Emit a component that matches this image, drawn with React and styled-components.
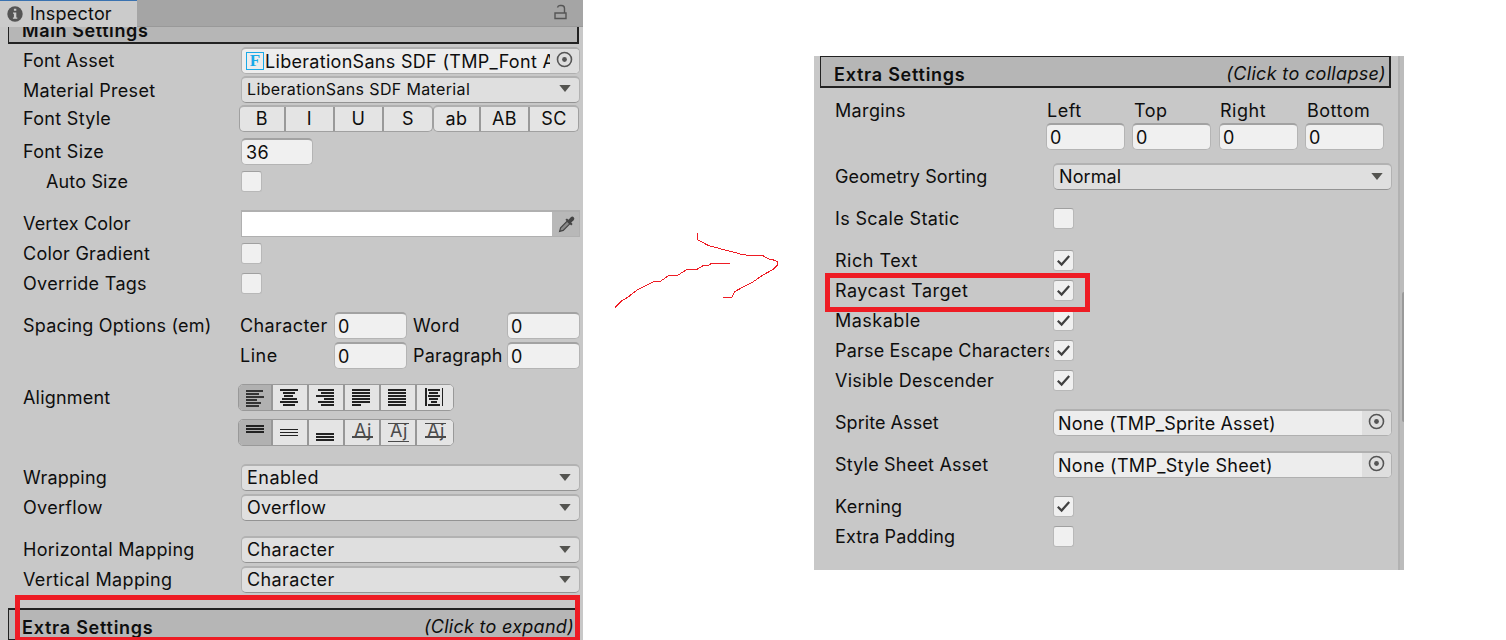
import React from "react";
import styled, { createGlobalStyle } from "styled-components";

const GlobalStyle = createGlobalStyle`
  * { box-sizing: border-box; }
  body {
    margin: 0;
    background: #fff;
    color: #0e0e0e;
    font-family: Inter, "Liberation Sans", sans-serif;
    font-size: 18px;
    letter-spacing: 0.5px;
    overflow: hidden;
  }
  svg { display: block; flex: none; }
`;

const Page = styled.div`
  display: flex;
  align-items: flex-start;
  width: 1506px;
  height: 640px;
  overflow: hidden;
`;

const LeftPanel = styled.section`
  width: 583px;
  height: 640px;
  background: #c8c8c8;
  overflow: hidden;
`;

const RightPanel = styled.section`
  display: flex;
  width: 590px;
  height: 514px;
  margin-top: 56px;
  background: #c8c8c8;
`;

const RightContent = styled.div`
  width: 584px;
`;

const Scrollbar = styled.div`
  width: 6px;
  padding: 236px 0 0 2px;
  border-left: 2px solid #b2b2b2;
  background: #bcbcbc;
`;

const Thumb = styled.div`
  height: 130px;
  border-radius: 3px 0 0 3px;
  background: #9a9a9a;
`;

const TabBar = styled.div`
  display: flex;
  justify-content: space-between;
  height: 27px;
  background: #a5a5a5;
  border-bottom: 1px solid #999;
`;

const Tab = styled.div`
  display: flex;
  align-items: center;
  gap: 7px;
  width: 137px;
  height: 27px;
  padding: 0 0 1px 7px;
  border-top: 1px solid #3a72b0;
  background: #cbcbcb;
  letter-spacing: 0.2px;
`;

const LockButton = styled.div`
  padding: 4px 16px 0 0;
`;

const Header = styled.div`
  display: flex;
  justify-content: space-between;
  align-items: flex-start;
  height: ${(p) => p.$h}px;
  margin: ${(p) => p.$mt || 0}px 0 0 ${(p) => p.$ml}px;
  width: 571px;
  padding: ${(p) => p.$pt}px 3px 0 13px;
  border: solid #222;
  border-width: ${(p) => p.$bw};
  background: #b6b6b6;
  line-height: 22px;
  white-space: nowrap;
`;

const Title = styled.span`
  font-weight: 600;
  letter-spacing: ${(p) => p.$ls || 0.75}px;
`;

const Hint = styled.em`
  margin-top: -1px;
  letter-spacing: ${(p) => p.$ls || 0.28}px;
`;

const ClippedTitle = styled(Title)`
  margin-top: -8px;
`;

const HeaderClip = styled.div`
  height: 17px;
  overflow: hidden;
`;

const Rows = styled.div`
  padding: ${(p) => p.$pt}px 0 0 ${(p) => p.$pl}px;
`;

const Row = styled.div`
  display: flex;
  align-items: center;
  height: ${(p) => p.$h || 30}px;
  margin-top: ${(p) => p.$mt || 0}px;
`;

const Label = styled.span`
  width: ${(p) => p.$w || 214}px;
  margin-right: ${(p) => (p.$w ? 3 : 4)}px;
  padding-top: ${(p) => p.$pt || 0}px;
  padding-left: ${(p) => p.$indent || 0}px;
  overflow: hidden;
  white-space: nowrap;
  letter-spacing: ${(p) => p.$ls || 0.25}px;
`;

const SmallLabel = styled(Label)`
  width: ${(p) => p.$w}px;
  margin-right: 0;
`;

const Input = styled.div`
  width: ${(p) => p.$w}px;
  height: 27px;
  padding-left: ${(p) => p.$pl || 3}px;
  border: 1px solid #b4b4b4;
  border-top: 2px solid #a2a2a2;
  border-radius: 5px;
  background: #f0f0f0;
  line-height: 25px;
`;

const Select = styled.div`
  display: flex;
  align-items: center;
  justify-content: space-between;
  width: 339px;
  height: 27px;
  padding: 0 8px ${(p) => p.$pb || 0}px 5px;
  border: 1px solid #b2b2b2;
  border-top-width: 2px;
  border-bottom-color: #939393;
  border-radius: 5px;
  background: #dfdfdf;
  font-size: ${(p) => p.$size || 18}px;
  letter-spacing: ${(p) => p.$ls || 0.4}px;
`;

const ObjectBox = styled.div`
  display: flex;
  align-items: center;
  width: 339px;
  height: 27px;
  padding-left: 4px;
  border: 1px solid #b0b0b0;
  border-top-width: 2px;
  border-radius: 5px;
  background: #ededed;
  overflow: hidden;
`;

const ObjectName = styled.span`
  flex: 1;
  padding-top: 2px;
  overflow: hidden;
  white-space: nowrap;
  letter-spacing: ${(p) => p.$ls || 0.3}px;
`;

const Picker = styled.div`
  display: flex;
  align-items: center;
  justify-content: center;
  width: 29px;
  height: 25px;
  padding-bottom: 2px;
  background: #dedede;
`;

const FontIcon = styled.span`
  display: flex;
  align-items: center;
  justify-content: center;
  width: 18px;
  height: 18px;
  margin-right: 1px;
  border: 1px solid #19a9e8;
  color: #19a9e8;
  font: bold 17px/16px "Liberation Serif", serif;
  letter-spacing: 0;
`;

const Check = styled.div`
  display: flex;
  align-items: center;
  justify-content: center;
  width: 21px;
  height: 21px;
  border: 1px solid #b8b8b8;
  border-top-color: #a0a0a0;
  border-radius: 3px;
  background: #f0f0f0;
`;

const ColorField = styled.div`
  display: flex;
  justify-content: space-between;
  width: 339px;
  height: 27px;
  border: 1px solid #b0b0b0;
  border-top-width: 2px;
`;

const Swatch = styled.div`
  width: 310px;
  background: #fff;
`;

const Dropper = styled.div`
  display: flex;
  align-items: center;
  justify-content: center;
  width: 27px;
  padding-left: 2px;
  background: #b8b8b8;
`;

const ButtonGroup = styled.div`
  display: flex;
  height: 27px;
  border: 1px solid #a0a0a0;
  border-top: 2px solid #b0b0b0;
  border-radius: 5px;
  background: #e4e4e4;
  overflow: hidden;
`;

const StyleButton = styled.div`
  width: ${(p) => p.$w}px;
  border-right: 2px solid #999;
  text-align: center;
  line-height: 24px;
  &:last-child { border-right: 0; }
`;

const StyleButtons = styled.div`
  display: flex;
  margin-left: -2px;
`;

const AlignGroup = styled(ButtonGroup)`
  width: 216px;
  margin-left: -3px;
  border: 1px solid #999;
`;

const AlignButton = styled.div`
  display: flex;
  justify-content: center;
  width: 36px;
  padding-right: 2px;
  border-right: 2px solid #979797;
  background: ${(p) => (p.$active ? "#b1b1b1" : "#e4e4e4")};
  &:first-child { width: 34px; padding-right: 0; }
  &:last-child { border-right: 0; }
`;

const MarginColumn = styled.div`
  width: ${(p) => p.$w}px;
  display: flex;
  flex-direction: column;
`;

const MarginName = styled.span`
  height: 26px;
  line-height: 28px;
  padding-left: ${(p) => p.$pl || 0}px;
`;

const MarginsLabel = styled(Label)`
  line-height: 28px;
`;

const MarginRow = styled.div`
  display: flex;
  height: 64px;
`;

const Middle = styled.div`
  width: 231px;
  padding: 220px 0 0 22px;
`;

// pen marks drawn over the panels
const Marker = styled.div`
  position: absolute;
  left: ${(p) => p.$x}px;
  top: ${(p) => p.$y}px;
  width: ${(p) => p.$w}px;
  height: ${(p) => p.$h}px;
  border: 5px solid #ee1c24;
`;

const Arrow = () => (
  <svg width="12" height="7" viewBox="0 0 12 7">
    <path d="M0.3 0h11.4L6 7z" fill="#545450" />
  </svg>
);

const Target = () => (
  <svg width="17" height="17" viewBox="0 0 17 17">
    <circle cx="8.5" cy="8.5" r="7" fill="none" stroke="#555" strokeWidth="1.6" />
    <circle cx="8.5" cy="8.5" r="2.4" fill="#555" />
  </svg>
);

const Info = () => (
  <svg width="16" height="16" viewBox="0 0 16 16">
    <circle cx="8" cy="8" r="7.7" fill="#555" />
    <path d="M6.9 2.8h2.4v2H6.9zM6 6.4h3.3v5h1v1.4H5.9v-1.4h1V7.8H6z" fill="#cbcbcb" />
  </svg>
);

const Lock = () => (
  <svg width="13" height="16" viewBox="0 0 13 16">
    <path d="M1 9h11v5.5H1zM10.5 9V4.5Q10.5 1.5 7.5 1.5H6Q4 1.5 3.5 3.5" fill="none" stroke="#555" strokeWidth="1.4" />
  </svg>
);

const Pipette = () => (
  <svg width="18" height="18" viewBox="0 0 18 18">
    <path d="M1.6 16.4l1-3.6L9.2 6.2l2.6 2.6-6.6 6.6z" fill="#8a8a8a" stroke="#444" strokeWidth="1.2" />
    <path d="M7.4 4.8l1.5-1.4 1.6 1.4 2.3-2.5q1.5-1.4 2.9 0t0 2.9l-2.5 2.3 1.4 1.6-1.4 1.5z" fill="#444" />
  </svg>
);

const CheckBox = ({ on }) => (
  <Check>
    {on && (
      <svg width="15" height="13" viewBox="0 0 15 13">
        <path d="M1.8 6.8L5.6 10.6 13.2 2" fill="none" stroke="#404040" strokeWidth="2.2" />
      </svg>
    )}
  </Check>
);

const Bars = ({ bars, color = "#222" }) => (
  <svg width="18" height="25" viewBox="0 0 18 25" shapeRendering="crispEdges" fill={color}>
    {bars.map(([x, y, w, h = 2], i) => (
      <rect key={i} x={x} y={y} width={w} height={h} />
    ))}
  </svg>
);

const Glyphs = ({ lines }) => (
  <svg width="23" height="25" viewBox="-2 0 23 25" fill="#4a4a4a">
    <text x="2" y="17" fontSize="18" fontWeight="400" letterSpacing="0.5">Aj</text>
    {lines.map(([y, h]) => (
      <rect key={y} x="0" y={y} width="21" height={h} />
    ))}
  </svg>
);

const stack = (rows, y0 = 4) => rows.map(([x, w], i) => [x, y0 + i * 3, w]);

const horizontal = [
  stack([[0, 17], [0, 13], [0, 18], [0, 11], [0, 15], [0, 13]], 5),
  stack([[0, 18], [3, 12], [4, 9], [2, 15], [0, 18], [3, 12]]),
  stack([[2, 16], [5, 13], [0, 18], [8, 10], [2, 16], [5, 13]]),
  stack([[0, 18], [0, 18], [0, 18], [0, 18], [0, 18], [0, 9]]),
  stack([[0, 18], [0, 18], [0, 18], [0, 18], [0, 18], [0, 18]]),
  [
    ...stack([[3, 12], [4, 9], [3, 12], [4, 9], [6, 6], [3, 12]]),
    [0, 3, 2, 18],
    [17, 3, 1, 18],
  ],
];

const Dropdown = ({ children, ...rest }) => (
  <Select {...rest}>
    {children}
    <Arrow />
  </Select>
);

const ObjectField = ({ icon, ls, children }) => (
  <ObjectBox>
    {icon && <FontIcon>F</FontIcon>}
    <ObjectName $ls={ls}>{children}</ObjectName>
    <Picker><Target /></Picker>
  </ObjectBox>
);

const Inspector = () => (
  <LeftPanel>
    <TabBar>
      <Tab><Info />Inspector</Tab>
      <LockButton><Lock /></LockButton>
    </TabBar>
    <HeaderClip>
      <Header $h={17} $ml={8} $pt={1} $bw="0 2px 2px 1px">
        <ClippedTitle $ls={0.6}>Main Settings</ClippedTitle>
      </Header>
    </HeaderClip>
    <Rows $pt={1} $pl={23}>
      <Row>
        <Label $ls={0.15}>Font Asset</Label>
        <ObjectField icon>LiberationSans SDF (TMP_Font Asset)</ObjectField>
      </Row>
      <Row $h={28}>
        <Label $ls={0.3} $pt={2}>Material Preset</Label>
        <Dropdown $size={16} $ls={0.36} $pb={2}>LiberationSans SDF Material</Dropdown>
      </Row>
      <Row>
        <Label $ls={0.3}>Font Style</Label>
        <StyleButtons>
          <ButtonGroup>
            <StyleButton $w={46}>B</StyleButton>
            <StyleButton $w={49}>I</StyleButton>
            <StyleButton $w={49}>U</StyleButton>
            <StyleButton $w={48}>S</StyleButton>
          </ButtonGroup>
          <ButtonGroup>
            <StyleButton $w={47}>ab</StyleButton>
            <StyleButton $w={49}>AB</StyleButton>
            <StyleButton $w={48}>SC</StyleButton>
          </ButtonGroup>
        </StyleButtons>
      </Row>
      <Row $mt={3}>
        <Label $ls={0.3}>Font Size</Label>
        <Input $w={72} $pl={4}>36</Input>
      </Row>
      <Row>
        <Label $ls={0.15} $indent={23}>Auto Size</Label>
        <CheckBox />
      </Row>
      <Row $mt={12}>
        <Label $ls={0.17}>Vertex Color</Label>
        <ColorField>
          <Swatch />
          <Dropper><Pipette /></Dropper>
        </ColorField>
      </Row>
      <Row>
        <Label $ls={0.25}>Color Gradient</Label>
        <CheckBox />
      </Row>
      <Row>
        <Label $ls={0.3}>Override Tags</Label>
        <CheckBox />
      </Row>
      <Row $mt={12}>
        <Label $w={214} $ls={0.2}>Spacing Options (em)</Label>
        <SmallLabel $w={94} $ls={0.4}>Character</SmallLabel>
        <Input $w={73}>0</Input>
        <SmallLabel $w={100} $indent={6} $ls={0.5}>Word</SmallLabel>
        <Input $w={73}>0</Input>
      </Row>
      <Row>
        <Label $w={214} />
        <SmallLabel $w={94} $ls={0.5}>Line</SmallLabel>
        <Input $w={73}>0</Input>
        <SmallLabel $w={100} $indent={6} $ls={0.17}>Paragraph</SmallLabel>
        <Input $w={73}>0</Input>
      </Row>
      <Row $mt={12}>
        <Label $ls={0.2}>Alignment</Label>
        <AlignGroup>
          {horizontal.map((bars, i) => (
            <AlignButton key={i} $active={i === 0}>
              <Bars bars={bars} color={i === 0 ? "#333" : "#222"} />
            </AlignButton>
          ))}
        </AlignGroup>
      </Row>
      <Row $mt={5}>
        <Label />
        <AlignGroup>
          <AlignButton $active><Bars bars={[[0, 5, 18], [0, 8, 18], [0, 11, 18]]} /></AlignButton>
          <AlignButton><Bars bars={[[0, 9, 18, 1], [0, 12, 18, 1], [0, 15, 18, 1]]} /></AlignButton>
          <AlignButton><Bars bars={[[0, 13, 18], [0, 16, 18], [0, 19, 18]]} /></AlignButton>
          <AlignButton><Glyphs lines={[[16, 2]]} /></AlignButton>
          <AlignButton><Glyphs lines={[[3, 1], [21, 1]]} /></AlignButton>
          <AlignButton><Glyphs lines={[[3, 1], [16, 2]]} /></AlignButton>
        </AlignGroup>
      </Row>
      <Row $mt={15}>
        <Label>Wrapping</Label>
        <Dropdown $ls={0.5}>Enabled</Dropdown>
      </Row>
      <Row>
        <Label $ls={0.3}>Overflow</Label>
        <Dropdown $ls={0.25}>Overflow</Dropdown>
      </Row>
      <Row $mt={12}>
        <Label $ls={0.28}>Horizontal Mapping</Label>
        <Dropdown>Character</Dropdown>
      </Row>
      <Row>
        <Label $ls={0.35}>Vertical Mapping</Label>
        <Dropdown>Character</Dropdown>
      </Row>
    </Rows>
    <Header $h={32} $mt={14} $ml={8} $pt={7} $bw="2px 2px 1px 1px">
      <Title>Extra Settings</Title>
      <Hint>(Click to expand)</Hint>
    </Header>
  </LeftPanel>
);

const ExtraSettings = () => (
  <RightPanel>
    <RightContent>
      <Header $h={32} $ml={6} $pt={7} $bw="1px 2px 2px 1px">
        <Title>Extra Settings</Title>
        <Hint $ls={0.33}>(Click to collapse)</Hint>
      </Header>
      <Rows $pt={9} $pl={21}>
        <MarginRow>
          <MarginsLabel $w={208} $ls={0.35}>Margins</MarginsLabel>
          <MarginColumn $w={86}><MarginName $pl={1}>Left</MarginName><Input $w={79}>0</Input></MarginColumn>
          <MarginColumn $w={87}><MarginName $pl={2}>Top</MarginName><Input $w={79}>0</Input></MarginColumn>
          <MarginColumn $w={86}><MarginName $pl={1}>Right</MarginName><Input $w={79}>0</Input></MarginColumn>
          <MarginColumn $w={86}><MarginName $pl={2}>Bottom</MarginName><Input $w={79}>0</Input></MarginColumn>
        </MarginRow>
        <Row>
          <Label $ls={0.12}>Geometry Sorting</Label>
          <Dropdown $ls={0.1}>Normal</Dropdown>
        </Row>
        <Row $mt={12}><Label $ls={0.34}>Is Scale Static</Label><CheckBox /></Row>
        <Row $mt={12}><Label $ls={0.5}>Rich Text</Label><CheckBox on /></Row>
        <Row><Label $ls={0.5}>Raycast Target</Label><CheckBox on /></Row>
        <Row><Label $ls={0.5}>Maskable</Label><CheckBox on /></Row>
        <Row><Label $ls={0.19}>Parse Escape Characters</Label><CheckBox on /></Row>
        <Row><Label $ls={0.28}>Visible Descender</Label><CheckBox on /></Row>
        <Row $mt={12}>
          <Label $ls={0.05}>Sprite Asset</Label>
          <ObjectField ls={0.15}>None (TMP_Sprite Asset)</ObjectField>
        </Row>
        <Row $mt={12}>
          <Label $ls={0.2}>Style Sheet Asset</Label>
          <ObjectField>None (TMP_Style Sheet)</ObjectField>
        </Row>
        <Row $mt={12}><Label $ls={0.25}>Kerning</Label><CheckBox on /></Row>
        <Row><Label $ls={0.12}>Extra Padding</Label><CheckBox /></Row>
      </Rows>
    </RightContent>
    <Scrollbar><Thumb /></Scrollbar>
  </RightPanel>
);

export default function App() {
  return (
    <Page>
      <GlobalStyle />
      <Inspector />
      <Middle>
        <svg width="190" height="100" viewBox="0 0 570 300" fill="none" stroke="#ee1c24" strokeWidth="3" shapeRendering="crispEdges">
          <polyline points="30,263 52,241 68,232 95,211 142,187 148,184 166,184 192,166 218,166 245,149 276,148 296,136 310,136 320,130 375,130" />
          <polyline points="277,39 277,59 311,77 410,103 430,106 472,106 492,117 503,119 517,125 517,136 503,149 474,165 445,185 414,201 389,215 381,232 354,232" />
        </svg>
      </Middle>
      <ExtraSettings />
      <Marker $x={15} $y={595} $w={565} $h={47} />
      <Marker $x={825} $y={273} $w={265} $h={39} />
    </Page>
  );
}
